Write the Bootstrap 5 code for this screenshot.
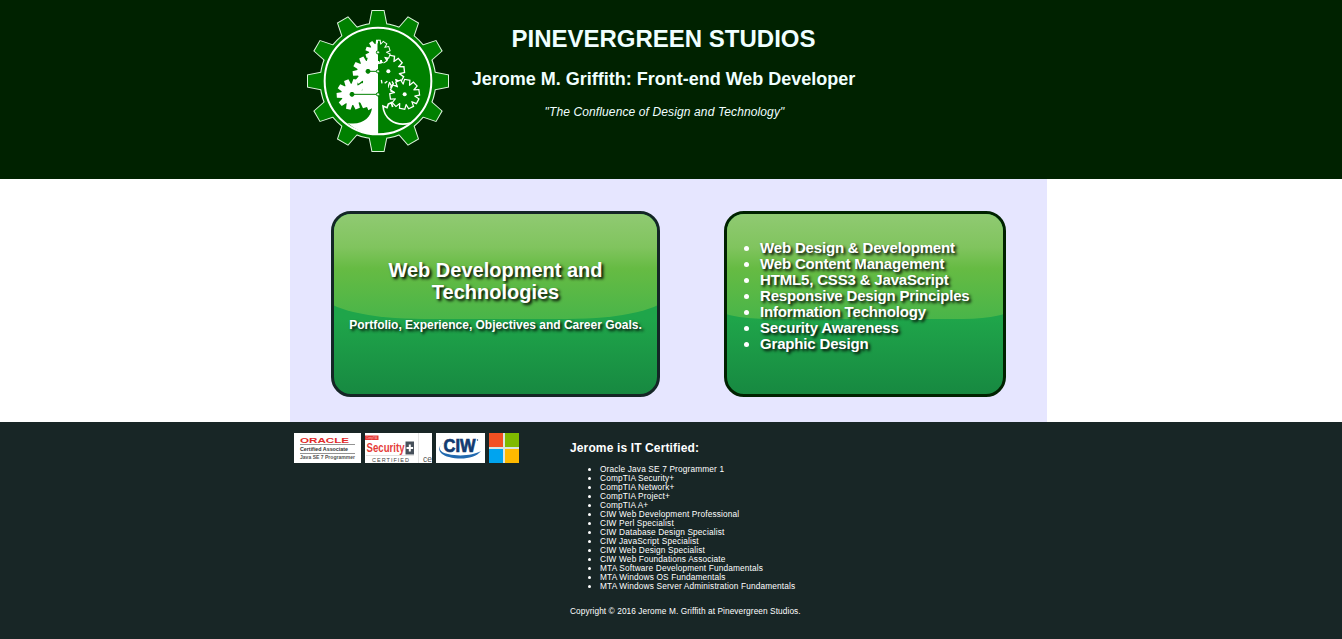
<!DOCTYPE html>
<html lang="en">
<head>
<meta charset="utf-8">
<meta name="viewport" content="width=device-width, initial-scale=1">
<title>Pinevergreen Studios</title>
<link href="https://cdn.jsdelivr.net/npm/bootstrap@5.3.0/dist/css/bootstrap.min.css" rel="stylesheet">
<style>
body{font-family:"Liberation Sans",Arial,sans-serif;color:#fff;line-height:1.15;background:#fff;overflow:hidden}
.frame{width:757px;margin-left:290px}
.site-head{background:#002200;height:179px}
.site-head .frame{padding:10px 0 0 17px}
.brand-text{width:386px;margin-left:21.500px;color:#f0ffff}
.brand-text h1{font-size:24px;font-weight:700;line-height:28px;margin:15px 0 0;white-space:nowrap}
.brand-text h2{font-size:18px;font-weight:700;line-height:20px;margin:16px 0 0;white-space:nowrap}
.brand-text p{font-size:12px;line-height:14px;margin:16px 0 0 2px;letter-spacing:.12px}
.stage{background:#e6e6ff;height:243px;padding:32px 41px 0}
.tile{height:186px;border:3px solid #142626;border-radius:20px;overflow:hidden;background:linear-gradient(#1fa74a 0,#1fa54a 58%,#178941 100%);text-shadow:2px 2px 3px #000;color:#fff}
.tile::before{content:"";position:absolute;top:0;left:-10px;right:-10px;height:105px;background:linear-gradient(#90ca72 0,#80c45e 32%,#66bb43 52%,#49b549 100%);border-radius:0 0 100px 100px/0 0 24px 24px}
.tile > *{position:relative}
.tile-main{width:329px}
.tile-main h3{font-size:20px;line-height:22px;font-weight:700;margin:45px 0 0}
.tile-main p{font-size:12px;line-height:14px;font-weight:700;margin:15px 0 0;white-space:nowrap;letter-spacing:-.02px}
.tile-skills{width:282px;border-color:#002200}
.tile-skills::before{border-radius:0 0 50px 50px/0 0 12px 12px}
.tile-skills ul{font-size:15px;line-height:16px;font-weight:700;margin:26px 0 0;padding-left:33px;letter-spacing:-.17px}
.site-foot{background:#182626;height:217px}
.logos{width:280px;padding:11px 0 0 4px;gap:4px}
.certs h4{font-size:12px;line-height:14px;font-weight:700;margin:19px 0 0;letter-spacing:.13px}
.certs ul{font-size:8.300px;line-height:9px;margin:10px 0 0;padding-left:30px;letter-spacing:.15px}
.certs p{font-size:8.300px;line-height:9px;margin:16px 0 0;letter-spacing:.08px}
</style>
</head>
<body>
<header class="site-head">
<div class="frame d-flex align-items-start">
<svg class="flex-shrink-0" width="142" height="143" viewBox="27 30 426 429">
<defs>
<path id="tooth" d="M-27 -160L-17 -210H17L27 -160Z"/>
<g id="wheel"><circle r="172"/><use href="#tooth"/><use href="#tooth" transform="rotate(30)"/><use href="#tooth" transform="rotate(60)"/><use href="#tooth" transform="rotate(90)"/><use href="#tooth" transform="rotate(120)"/><use href="#tooth" transform="rotate(150)"/><use href="#tooth" transform="rotate(180)"/><use href="#tooth" transform="rotate(210)"/><use href="#tooth" transform="rotate(240)"/><use href="#tooth" transform="rotate(270)"/><use href="#tooth" transform="rotate(300)"/><use href="#tooth" transform="rotate(330)"/></g>
<path id="cog-tooth" d="M-9 -28L-7 -46H7L9 -28Z"/>
<g id="cog"><circle r="32"/><use href="#cog-tooth"/><use href="#cog-tooth" transform="rotate(36)"/><use href="#cog-tooth" transform="rotate(72)"/><use href="#cog-tooth" transform="rotate(108)"/><use href="#cog-tooth" transform="rotate(144)"/><use href="#cog-tooth" transform="rotate(180)"/><use href="#cog-tooth" transform="rotate(216)"/><use href="#cog-tooth" transform="rotate(252)"/><use href="#cog-tooth" transform="rotate(288)"/><use href="#cog-tooth" transform="rotate(324)"/></g>
<clipPath id="west"><path d="M80 80H241V410H80Z"/></clipPath>
<clipPath id="east"><path d="M240 80H400V410H240Z"/></clipPath>
</defs>
<g transform="translate(240 243)"><use href="#wheel" fill="#008000" stroke="#dcf5dc" stroke-width="6"/><use href="#wheel" fill="#008000"/><circle r="160" fill="none" stroke="#fff" stroke-width="6"/></g>
<g clip-path="url(#west)" fill="#fff">
<use href="#cog" transform="translate(240 157) scale(.82)"/>
<use href="#cog" transform="translate(210 214) rotate(10)"/>
<use href="#cog" transform="translate(162 283) rotate(14)"/>
<path d="M225 180H241V405Q190 404 148 369C193 377 218 354 222 325L211 331L207 321L195 325L188 310L196 240Z"/>
</g>
<g clip-path="url(#east)" stroke="#fff" stroke-width="8">
<use href="#cog" transform="translate(271 214) rotate(12)"/>
<use href="#cog" transform="translate(271 214) rotate(12)" fill="#008000" stroke="none"/>
<use href="#cog" transform="translate(240 157) scale(.75)"/>
<use href="#cog" transform="translate(240 157) scale(.75)" fill="#008000" stroke="none"/>
<path d="M240 190H270V290H240Z" fill="#008000" stroke="none"/>
<use href="#cog" transform="translate(320 283) rotate(10) scale(.92)"/>
<use href="#cog" transform="translate(320 283) rotate(10) scale(.92)" fill="#008000" stroke="none"/>
</g>
<g fill="none" stroke="#fff" stroke-width="4">
<path d="M242 183V190L250 188V180M250 240L252 250M260 250L268 244M277 263L286 251L282 244M277 273L290 278"/>
<path d="M284 321L280 308L271 312L267 323L255 318C257 350 286 383 338 369" stroke-width="5"/>
</g>
<g fill="#fff"><circle cx="271" cy="214" r="6"/><circle cx="320" cy="283" r="6"/></g>
<g stroke="#008000" stroke-width="3" fill="#008000"><path d="M210 214H236M162 283H235M240 130V150"/><circle cx="210" cy="214" r="6"/><circle cx="162" cy="283" r="6"/></g>
<g stroke="#008000" stroke-width="3" fill="#dff5df"><circle cx="240" cy="157" r="5"/><circle cx="240" cy="214" r="5"/><circle cx="240" cy="283" r="5"/></g>
</svg>
<div class="brand-text text-center">
<h1>PINEVERGREEN STUDIOS</h1>
<h2>Jerome M. Griffith: Front-end Web Developer</h2>
<p class="fst-italic">"The Confluence of Design and Technology"</p>
</div>
</div>
</header>
<main class="frame stage d-flex justify-content-between align-items-start">
<section class="tile tile-main position-relative text-center">
<h3>Web Development and<br>Technologies</h3>
<p>Portfolio, Experience, Objectives and Career Goals.</p>
</section>
<section class="tile tile-skills position-relative">
<ul><li>Web Design &amp; Development</li><li>Web Content Management</li><li>HTML5, CSS3 &amp; JavaScript</li><li>Responsive Design Principles</li><li>Information Technology</li><li>Security Awareness</li><li>Graphic Design</li></ul>
</section>
</main>
<footer class="site-foot">
<div class="frame d-flex align-items-start">
<div class="logos d-flex">
<svg width="67" height="30" viewBox="0 0 67 30" font-family="Liberation Sans,sans-serif"><path fill="#fff" d="M0 0h67v30H0z"/><text x="6" y="9.500" font-size="8" font-weight="700" fill="#e02b2b" textLength="49" lengthAdjust="spacingAndGlyphs">ORACLE</text><path d="M6 11.500h55M6 20.500h55" stroke="#777" stroke-width=".8"/><text x="6" y="18" font-size="5" font-weight="700" fill="#333" textLength="48" lengthAdjust="spacingAndGlyphs">Certified Associate</text><text x="6" y="26" font-size="5" font-weight="700" fill="#555" textLength="55" lengthAdjust="spacingAndGlyphs">Java SE 7 Programmer</text></svg>
<svg width="67" height="30" viewBox="0 0 67 30" font-family="Liberation Sans,sans-serif"><path fill="#fff" d="M0 0h67v30H0z"/><path fill="#e53935" d="M0 2.500h13.500v4.500H0z"/><text x="1" y="6.200" font-size="4" fill="#fbb" textLength="11" lengthAdjust="spacingAndGlyphs">CompTIA</text><text x="1.500" y="18.500" font-size="13" font-weight="700" fill="#e53c38" textLength="38" lengthAdjust="spacingAndGlyphs">Security</text><path fill="#46505a" d="M40.500 8.500h8.500v13h-8.500z"/><path d="M44.800 11.500v7M41.500 15h6.600" stroke="#fff" stroke-width="2"/><path d="M1 22.500h48" stroke="#ccc" stroke-width=".6"/><text x="7" y="29" font-size="5.500" fill="#444" textLength="37">CERTIFIED</text><path d="M53.500 0v30" stroke="#ddd" stroke-width=".8"/><text x="58" y="28.500" font-size="8.500" fill="#555">ce</text></svg>
<svg width="49" height="30" viewBox="0 0 49 30" font-family="Liberation Sans,sans-serif"><path fill="#fff" d="M0 0h49v30H0z"/><path d="M8 10C1 13 3 20 12 21C24 24 38 22 45 18C39 26 24 27 13 24C1 21 1 13 8 10Z" fill="#2169af"/><text x="7.500" y="19" font-size="18" font-weight="700" fill="#123a70" stroke="#123a70" stroke-width=".7" textLength="32" lengthAdjust="spacingAndGlyphs">CIW</text><circle cx="41.500" cy="7" r=".7" fill="#123a70"/></svg>
<svg width="30" height="30" viewBox="0 0 30 30"><path fill="#d9e5df" d="M0 0h30v30H0z"/><path fill="#f25022" d="M0 0h14v14H0z"/><path fill="#7fba00" d="M16 0h14v14H16z"/><path fill="#00a4ef" d="M0 16h14v14H0z"/><path fill="#ffb900" d="M16 16h14v14H16z"/></svg>
</div>
<div class="certs">
<h4>Jerome is IT Certified:</h4>
<ul><li>Oracle Java SE 7 Programmer 1</li><li>CompTIA Security+</li><li>CompTIA Network+</li><li>CompTIA Project+</li><li>CompTIA A+</li><li>CIW Web Development Professional</li><li>CIW Perl Specialist</li><li>CIW Database Design Specialist</li><li>CIW JavaScript Specialist</li><li>CIW Web Design Specialist</li><li>CIW Web Foundations Associate</li><li>MTA Software Development Fundamentals</li><li>MTA Windows OS Fundamentals</li><li>MTA Windows Server Administration Fundamentals</li></ul>
<p>Copyright © 2016 Jerome M. Griffith at Pinevergreen Studios.</p>
</div>
</div>
</footer>
<script src="https://cdn.jsdelivr.net/npm/bootstrap@5.3.0/dist/js/bootstrap.bundle.min.js"></script>
</body>
</html>
